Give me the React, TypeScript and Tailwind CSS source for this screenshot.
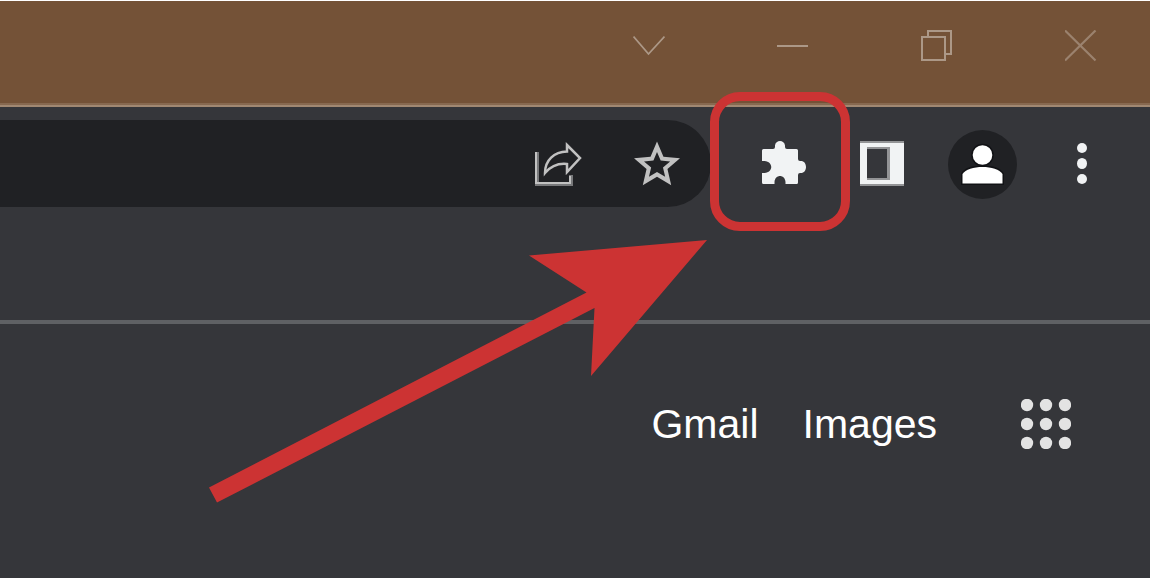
import React from "react";

interface IconButtonProps {
  label: string;
  className?: string;
  children: React.ReactNode;
}

const IconButton: React.FC<IconButtonProps> = ({
  label,
  className = "",
  children,
}) => {
  return (
    <button
      type="button"
      aria-label={label}
      className={`block shrink-0 cursor-pointer ${className}`}
    >
      {children}
    </button>
  );
};

const TitleBar = () => {
  return (
    <header className="border-t border-white bg-[#745237]">
      <div className="flex h-[102px] justify-end gap-28 pt-[29px] pr-[53px] text-[#ac9887]">
        <IconButton label="Search tabs" className="h-8">
          <svg width="32" height="32" fill="none" stroke="currentColor" strokeWidth="1.8">
            <path d="M0.5 6.5L15.5 24L31.5 6.5" />
          </svg>
        </IconButton>
        <IconButton label="Minimize" className="h-8">
          <svg width="32" height="32" fill="currentColor">
            <path d="M0 15h31v2H0z" />
          </svg>
        </IconButton>
        <IconButton label="Restore" className="h-8">
          <svg width="32" height="32" fill="none" stroke="currentColor" strokeWidth="2">
            <path d="M1 7h23v23H1zM7 7V1h23v23h-6" />
          </svg>
        </IconButton>
        <IconButton label="Close" className="h-8">
          <svg width="32" height="32" fill="none" stroke="#9b826e" strokeWidth="2.2">
            <path d="M0 0.5L30.5 30.5M30.5 0.5L0 30.5" />
          </svg>
        </IconButton>
      </div>
      <div className="h-0.5 bg-[#876950]" />
      <div className="h-0.5 bg-[#a18872]" />
    </header>
  );
};

const AddressBar = () => {
  return (
    <div className="flex h-[87px] min-w-0 flex-1 items-center justify-end gap-[52px] rounded-r-full bg-[#202124] pr-[31px]">
      <IconButton label="Share this page">
        <svg width="48" height="46" fill="none">
          <path d="M3 11v32h34v-9" stroke="#77787a" strokeWidth="4" />
          <path d="M2 11v31h34v-7" stroke="#c1c1c1" strokeWidth="2" />
          <path
            d="M33 4L46 17L33 31V23C24 22 17 25 11 32C11 19 20 11 33 10.500Z"
            stroke="#c1c1c1"
            strokeWidth="2.5"
          />
        </svg>
      </IconButton>
      <IconButton label="Bookmark this tab">
        <svg width="46" height="46" viewBox="2 1.75 20 20" fill="#c1c1c1">
          <path d="M22 9.24l-7.19-.62L12 2 9.19 8.63 2 9.24l5.46 4.73L5.82 21 12 17.27 18.18 21l-1.63-7.03L22 9.24zM12 15.2l-3.5 2.1.95-4-3.1-2.68 4.1-.36L12 6.5l1.6 3.76 4.1.36-3.1 2.68.95 4L12 15.2z" />
        </svg>
      </IconButton>
    </div>
  );
};

// Ring around the extensions button, with the arrow that points at it
const Callout = () => {
  return (
    <>
      <span className="pointer-events-none absolute -top-7 -left-px z-10 h-[139px] w-[140px] rounded-[30px] border-[9px] border-[#cc3333]" />
      <svg
        className="pointer-events-none absolute top-[120px] right-[143px] z-10"
        width="498"
        height="263"
        fill="#cc3333"
      >
        <path d="M498 0L382 136L385.500 68L8 262.500L0 247.500L377.500 52.500L320 15.500Z" />
      </svg>
    </>
  );
};

const Toolbar = () => {
  return (
    <div className="flex items-center pt-[13px] pr-[63px]">
      <AddressBar />
      <div className="relative flex h-[87px] w-[139px] shrink-0 items-center pl-[51px]">
        <IconButton label="Extensions">
          <svg width="45" height="45" fill="#f1f3f4">
            <path d="M1.500 8H11Q13 8 13 6V4.500C13.500 -1.500 22.500 -1.500 23 4.500V6Q23 8 25 8H34.500Q36 8 36 9.500V18Q36 20 38 20H39.500C45.500 20.500 45.500 31.500 39.500 32H38Q36 32 36 34V41.500Q36 43 34.500 43H23.500V41C23 33 13 33 12.500 41V43H1.500Q0 43 0 41.500V32H2.500C11.500 31.500 11.500 20.500 2.500 20H0V9.500Q0 8 1.500 8Z" />
          </svg>
        </IconButton>
        <Callout />
      </div>
      <IconButton label="Side panel" className="ml-2.5">
        <svg width="44" height="45">
          <path d="M0 0h44v45H0z" fill="#939496" />
          <path d="M0 2h44v41H0z" fill="#f1f3f4" />
          <path d="M7 6h23v33H7z" fill="#939496" />
          <path d="M7 8h20v29H7z" fill="#35363a" />
        </svg>
      </IconButton>
      <IconButton label="Profile" className="ml-11">
        <svg width="69" height="70">
          <circle cx="34.500" cy="35.500" r="34.500" fill="#202124" />
          <g fill="#fff" stroke="#111215" strokeWidth="3" paintOrder="stroke">
            <circle cx="34.500" cy="26" r="9.800" />
            <path d="M14.500 54.500V45C20 35.500 49 35.500 54.500 45V54.500Z" />
          </g>
        </svg>
      </IconButton>
      <IconButton label="Menu" className="ml-[60px]">
        <svg width="10" height="42" fill="#f1f3f4">
          <circle cx="5" cy="5" r="5" />
          <ellipse cx="5" cy="20.500" rx="5" ry="5.500" />
          <circle cx="5" cy="36" r="5" />
        </svg>
      </IconButton>
    </div>
  );
};

const dots = [6, 25, 44];

const PageLinks = () => {
  return (
    <nav className="flex items-center justify-end pt-[75px] pr-[79px] text-[41px] leading-[50px] text-white">
      <a href="#gmail">Gmail</a>
      <a href="#images" className="ml-[44px]">
        Images
      </a>
      <IconButton label="Google apps" className="ml-[84px]">
        <svg width="50" height="50" fill="#e3e3e3">
          {dots.map((y) =>
            dots.map((x) => <circle key={`${x}-${y}`} cx={x} cy={y} r="6.200" />)
          )}
        </svg>
      </IconButton>
    </nav>
  );
};

const App: React.FC = () => {
  return (
    <div className="min-h-screen overflow-hidden bg-[#35363a] font-['Liberation_Sans',Arial,sans-serif]">
      <TitleBar />
      <Toolbar />
      {/* Empty bookmarks bar */}
      <div className="h-[117px] border-b-4 border-[#5f6164]" />
      <main>
        <PageLinks />
      </main>
    </div>
  );
};

export default App;
